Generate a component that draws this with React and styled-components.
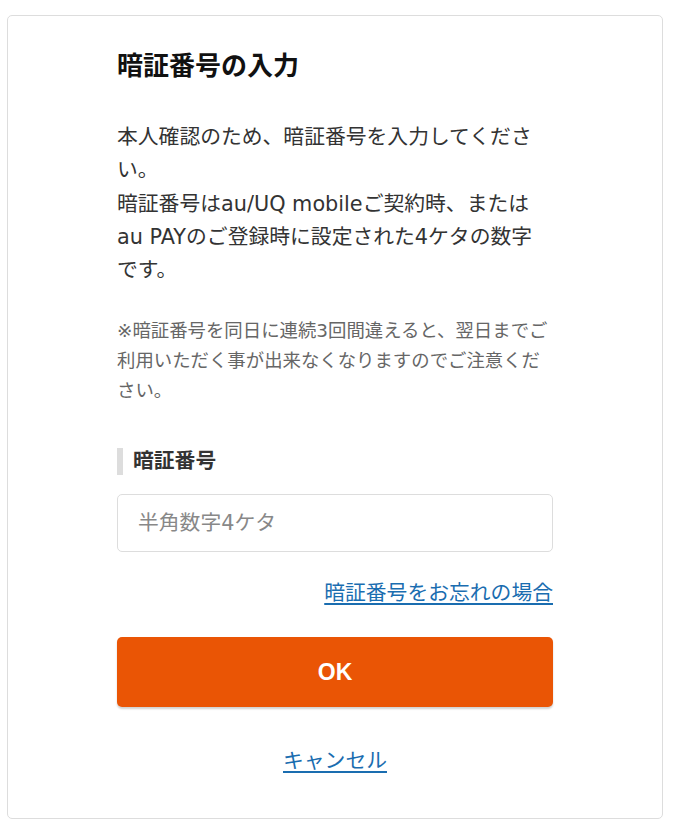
import React from 'react'
import styled, { createGlobalStyle } from 'styled-components'

const GlobalStyle = createGlobalStyle`
    body {
        margin: 0;
        background: #ffffff;
        font-family: "DejaVu Sans", "Noto Sans CJK JP", sans-serif;
        color: #333333;
    }
`

const Card = styled.div`
    margin: 15px 11px 12px 7px;
    border: 1px solid #dddddd;
    border-radius: 5px;
    background: #ffffff;
    padding: 31px 109px 40px;
`

const Title = styled.h1`
    margin: 0;
    font-size: 26px;
    line-height: 39px;
    font-weight: 700;
    color: #111111;
`

const Lead = styled.p`
    margin: 35px 0 0;
    padding-right: 4px;
    font-size: 20.8px;
    line-height: 33.3px;
    color: #333333;
`

const Note = styled.p`
    margin: 29px 0 0;
    font-size: 18.4px;
    line-height: 30px;
    color: #666666;
`

const Label = styled.div`
    margin-top: 42px;
    border-left: 6px solid #dddddd;
    padding-left: 10px;
    font-size: 20.8px;
    line-height: 27px;
    font-weight: 700;
    color: #333333;
`

const Input = styled.input`
    display: block;
    box-sizing: border-box;
    width: 100%;
    height: 58px;
    margin-top: 19px;
    padding: 0 20px;
    border: 1px solid #dddddd;
    border-radius: 5px;
    font-family: inherit;
    font-size: 20.8px;
    color: #333333;
    outline: none;
    &::placeholder {
        color: #888888;
    }
`

const LinkRow = styled.div`
    margin-top: ${p => p.$gap}px;
    text-align: ${p => p.$align};
    font-size: 20.8px;
    line-height: 33px;
    a {
        color: #1a6db0;
        text-decoration: underline;
        text-underline-offset: 3px;
    }
`

const Button = styled.button`
    display: block;
    width: 100%;
    height: 70px;
    margin-top: 27px;
    border: none;
    border-radius: 5px;
    background: #ea5505;
    box-shadow: 0 2px 2px rgba(0, 0, 0, 0.18);
    color: #ffffff;
    font-family: "Liberation Sans", Arial, sans-serif;
    font-size: 23px;
    font-weight: 700;
    cursor: pointer;
`

function App() {
    return (
        <>
            <GlobalStyle />
            <Card>
                <Title>暗証番号の入力</Title>
                <Lead>
                    本人確認のため、暗証番号を入力してください。<br />
                    暗証番号はau/UQ mobileご契約時、またはau PAYのご登録時に設定された4ケタの数字です。
                </Lead>
                <Note>※暗証番号を同日に連続3回間違えると、翌日までご利用いただく事が出来なくなりますのでご注意ください。</Note>
                <Label>暗証番号</Label>
                <Input type="tel" placeholder="半角数字4ケタ" />
                <LinkRow $align="right" $gap={25}>
                    <a href="#">暗証番号をお忘れの場合</a>
                </LinkRow>
                <Button>OK</Button>
                <LinkRow $align="center" $gap={38}>
                    <a href="#">キャンセル</a>
                </LinkRow>
            </Card>
        </>
    )
}

export default App
